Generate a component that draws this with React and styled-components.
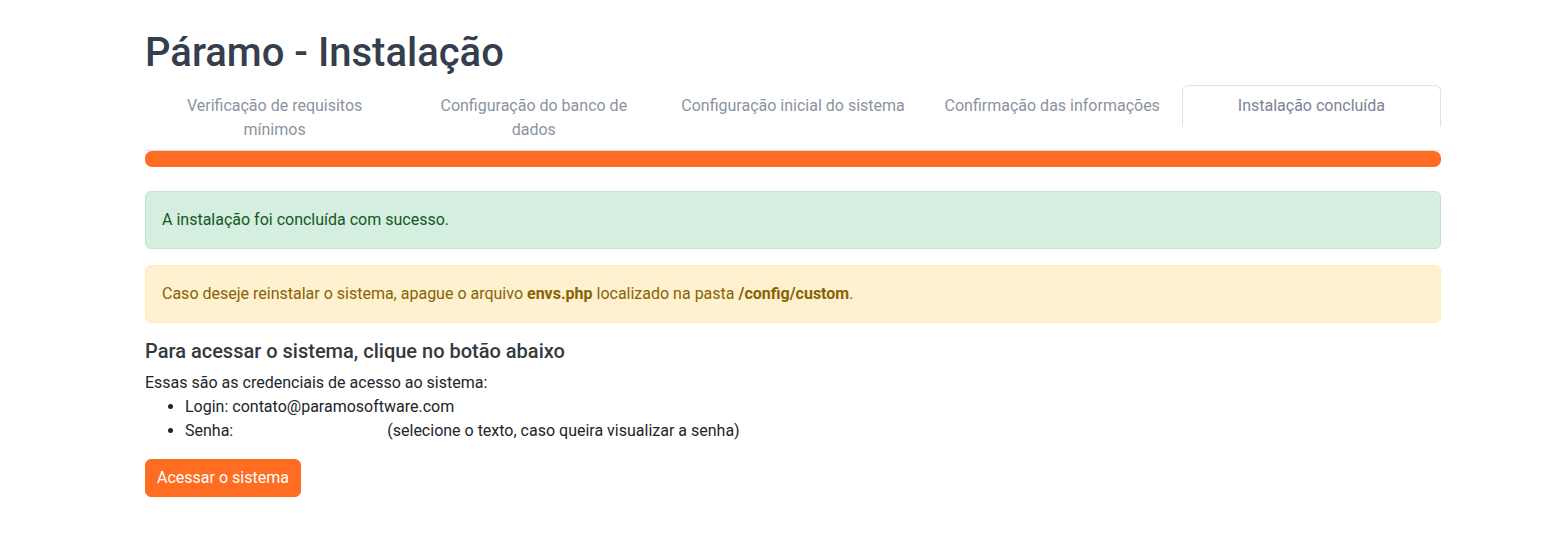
import React from "react";
import styled, { createGlobalStyle } from "styled-components";

const GlobalStyle = createGlobalStyle`
  body {
    margin: 0;
    font-family: Roboto, "Open Sans", sans-serif;
    font-size: 16px;
    line-height: 24px;
    color: #212529;
    background: #fff;
  }
`;

const Page = styled.div`
  width: 1296px;
  margin: 0 0 0 145px;
  padding-top: 29px;
`;

const Title = styled.h1`
  font-size: 40px;
  line-height: 48px;
  font-weight: 500;
  color: #343e4d;
  margin: 0 0 8px;
`;

const Tabs = styled.ul`
  display: flex;
  list-style: none;
  margin: 0;
  padding: 0;
  border-bottom: 1px solid #dee2e6;
`;

const TabItem = styled.li`
  flex: 1 1 0;
  display: flex;
  align-items: flex-start;
  margin-bottom: -1px;
`;

const TabLink = styled.a`
  flex: 1;
  display: block;
  text-align: center;
  padding: 8px 16px;
  color: ${(p) => (p.$active ? "#7a8496" : "#8b93a1")};
  border: 1px solid ${(p) => (p.$active ? "#dee2e6" : "transparent")};
  border-bottom-color: transparent;
  border-radius: 6px 6px 0 0;
  background: ${(p) => (p.$active ? "#fff" : "transparent")};
  text-decoration: none;
`;

const Progress = styled.div`
  height: 16px;
  border-radius: 7px;
  background: #e9ecef;
  overflow: hidden;
  display: flex;
`;

const ProgressBar = styled.div`
  background: #ff6d22;
  height: 100%;
`;

const Alert = styled.div`
  margin: ${(p) => (p.$first ? "24px" : "0")} 0 16px;
  padding: 16px;
  border: 1px solid ${(p) => (p.$kind === "success" ? "#c3e6cb" : "#ffeeba")};
  background: ${(p) => (p.$kind === "success" ? "#d4efdf" : "#fff0cf")};
  color: ${(p) => (p.$kind === "success" ? "#155724" : "#856404")};
  border-radius: 6px;
`;

const Heading = styled.h5`
  font-size: 20px;
  line-height: 24px;
  font-weight: 500;
  color: #343a40;
  margin: 0 0 8px;
`;

const Text = styled.p`
  margin: 0;
`;

const List = styled.ul`
  margin: 0 0 16px;
  padding-left: 40px;
`;

const Hidden = styled.span`
  color: #fff;
`;

const Button = styled.a`
  display: inline-block;
  padding: 6px 11px;
  border: 1px solid #ff6d22;
  border-radius: 6px;
  background: #ff6d22;
  color: #fff;
  text-decoration: none;
  cursor: pointer;
`;

const steps = [
  "Verificação de requisitos mínimos",
  "Configuração do banco de dados",
  "Configuração inicial do sistema",
  "Confirmação das informações",
  "Instalação concluída",
];

const App = () => {
  const current = 4;
  const percent = ((current + 1) / steps.length) * 100;

  return (
    <Page>
      <GlobalStyle />
      <Title>Páramo - Instalação</Title>
      <Tabs>
        {steps.map((s, i) => (
          <TabItem key={s}>
            <TabLink $active={i === current}>{s}</TabLink>
          </TabItem>
        ))}
      </Tabs>
      <Progress>
        <ProgressBar style={{ width: `${percent}%` }} />
      </Progress>
      <Alert $first $kind="success">
        A instalação foi concluída com sucesso.
      </Alert>
      <Alert $kind="warning">
        Caso deseje reinstalar o sistema, apague o arquivo <b>envs.php</b> localizado na
        pasta <b>/config/custom</b>.
      </Alert>
      <Heading>Para acessar o sistema, clique no botão abaixo</Heading>
      <Text>Essas são as credenciais de acesso ao sistema:</Text>
      <List>
        <li>Login: contato@paramosoftware.com</li>
        <li>
          Senha: <Hidden>pAr4m0-s0ftw4r3-x9</Hidden> (selecione o texto, caso queira
          visualizar a senha)
        </li>
      </List>
      <Button>Acessar o sistema</Button>
    </Page>
  );
};

export default App;
